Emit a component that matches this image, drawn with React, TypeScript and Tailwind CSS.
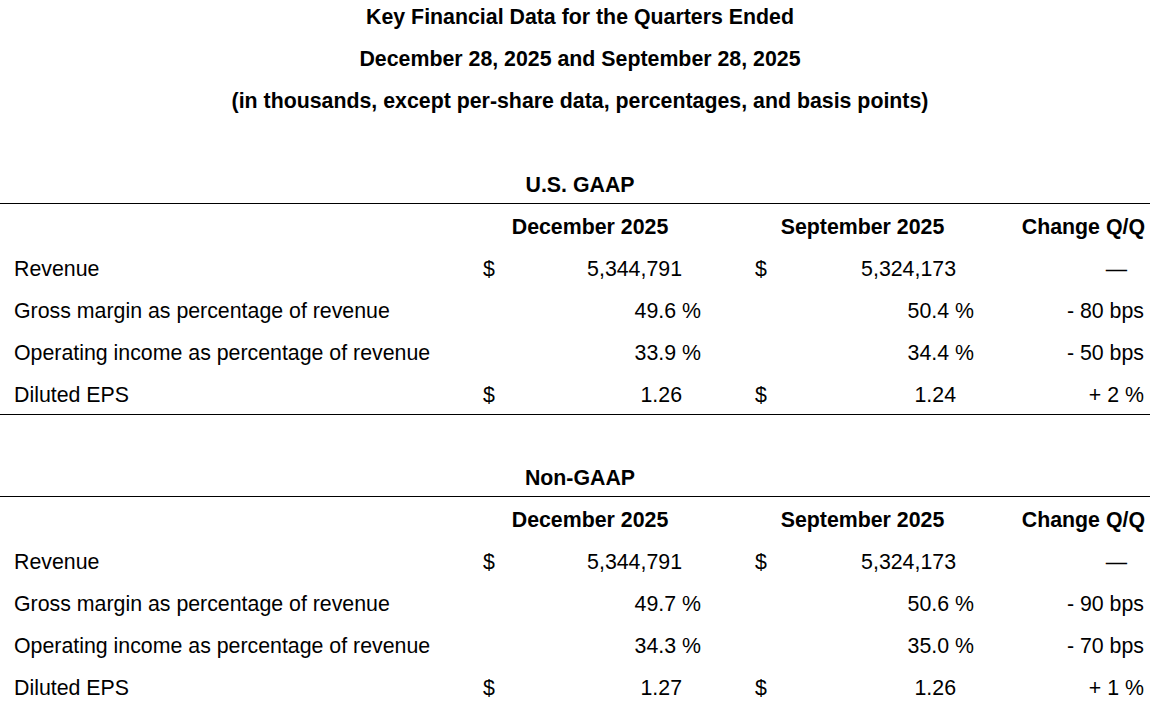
import React from "react";

type Row = {
  label: string;
  d1: boolean;
  v1: string;
  p1: boolean;
  d2: boolean;
  v2: string;
  p2: boolean;
  ch: string;
  dash?: boolean;
};

const gaap: Row[] = [
  { label: "Revenue", d1: true, v1: "5,344,791", p1: false, d2: true, v2: "5,324,173", p2: false, ch: "—", dash: true },
  { label: "Gross margin as percentage of revenue", d1: false, v1: "49.6 %", p1: true, d2: false, v2: "50.4 %", p2: true, ch: "- 80 bps" },
  { label: "Operating income as percentage of revenue", d1: false, v1: "33.9 %", p1: true, d2: false, v2: "34.4 %", p2: true, ch: "- 50 bps" },
  { label: "Diluted EPS", d1: true, v1: "1.26", p1: false, d2: true, v2: "1.24", p2: false, ch: "+ 2 %" },
];

const nonGaap: Row[] = [
  { label: "Revenue", d1: true, v1: "5,344,791", p1: false, d2: true, v2: "5,324,173", p2: false, ch: "—", dash: true },
  { label: "Gross margin as percentage of revenue", d1: false, v1: "49.7 %", p1: true, d2: false, v2: "50.6 %", p2: true, ch: "- 90 bps" },
  { label: "Operating income as percentage of revenue", d1: false, v1: "34.3 %", p1: true, d2: false, v2: "35.0 %", p2: true, ch: "- 70 bps" },
  { label: "Diluted EPS", d1: true, v1: "1.27", p1: false, d2: true, v2: "1.26", p2: false, ch: "+ 1 %" },
];

function DataRow({ r, last }: { r: Row; last: boolean }) {
  return (
    <div
      className={
        "grid grid-cols-[470px_30px_220px_50px_220px_160px] leading-[42px] whitespace-nowrap " +
        (last ? "h-[40px] overflow-visible" : "h-[42px]")
      }
    >
      <div className="pl-[14px]">{r.label}</div>
      <div className="pl-[13px]">{r.d1 ? "$" : ""}</div>
      <div className={"text-right " + (r.p1 ? "pr-[19px]" : "pr-[38px]")}>{r.v1}</div>
      <div className="pl-[35px]">{r.d2 ? "$" : ""}</div>
      <div className={"text-right " + (r.p2 ? "pr-[16px]" : "pr-[34px]")}>{r.v2}</div>
      <div className={"text-right " + (r.dash ? "pr-[23px]" : "pr-[6px]")}>{r.ch}</div>
    </div>
  );
}

function Section({ title, rows, className }: { title: string; rows: Row[]; className?: string }) {
  return (
    <div className={"w-[1150px] " + (className ?? "")}>
      <div className="h-[36px] border-b border-black pl-[10px] text-center font-bold leading-[34px]">{title}</div>
      <div className="grid h-[44px] grid-cols-[470px_30px_220px_50px_220px_160px] pt-[2px] font-bold leading-[42px] whitespace-nowrap">
        <div />
        <div className="col-span-2 pr-[10px] text-center">December 2025</div>
        <div className="col-span-2 pl-[15px] text-center">September 2025</div>
        <div className="pr-[5px] text-right">Change Q/Q</div>
      </div>
      <div className="border-b border-black">
        {rows.map((r, i) => (
          <DataRow key={i} r={r} last={i === rows.length - 1} />
        ))}
      </div>
    </div>
  );
}

export default function App() {
  return (
    <div
      className="h-[706px] w-[1156px] overflow-hidden bg-white text-[21.33px] text-black"
      style={{ fontFamily: '"Liberation Sans", Arial, sans-serif' }}
    >
      <div className="flex flex-col items-center gap-[8px] pl-[4px] font-bold leading-[34px]">
        <div>Key Financial Data for the Quarters Ended</div>
        <div>December 28, 2025 and September 28, 2025</div>
        <div>(in thousands, except per-share data, percentages, and basis points)</div>
      </div>
      <Section title="U.S. GAAP" rows={gaap} className="mt-[50px]" />
      <Section title="Non-GAAP" rows={nonGaap} className="mt-[46px]" />
    </div>
  );
}
